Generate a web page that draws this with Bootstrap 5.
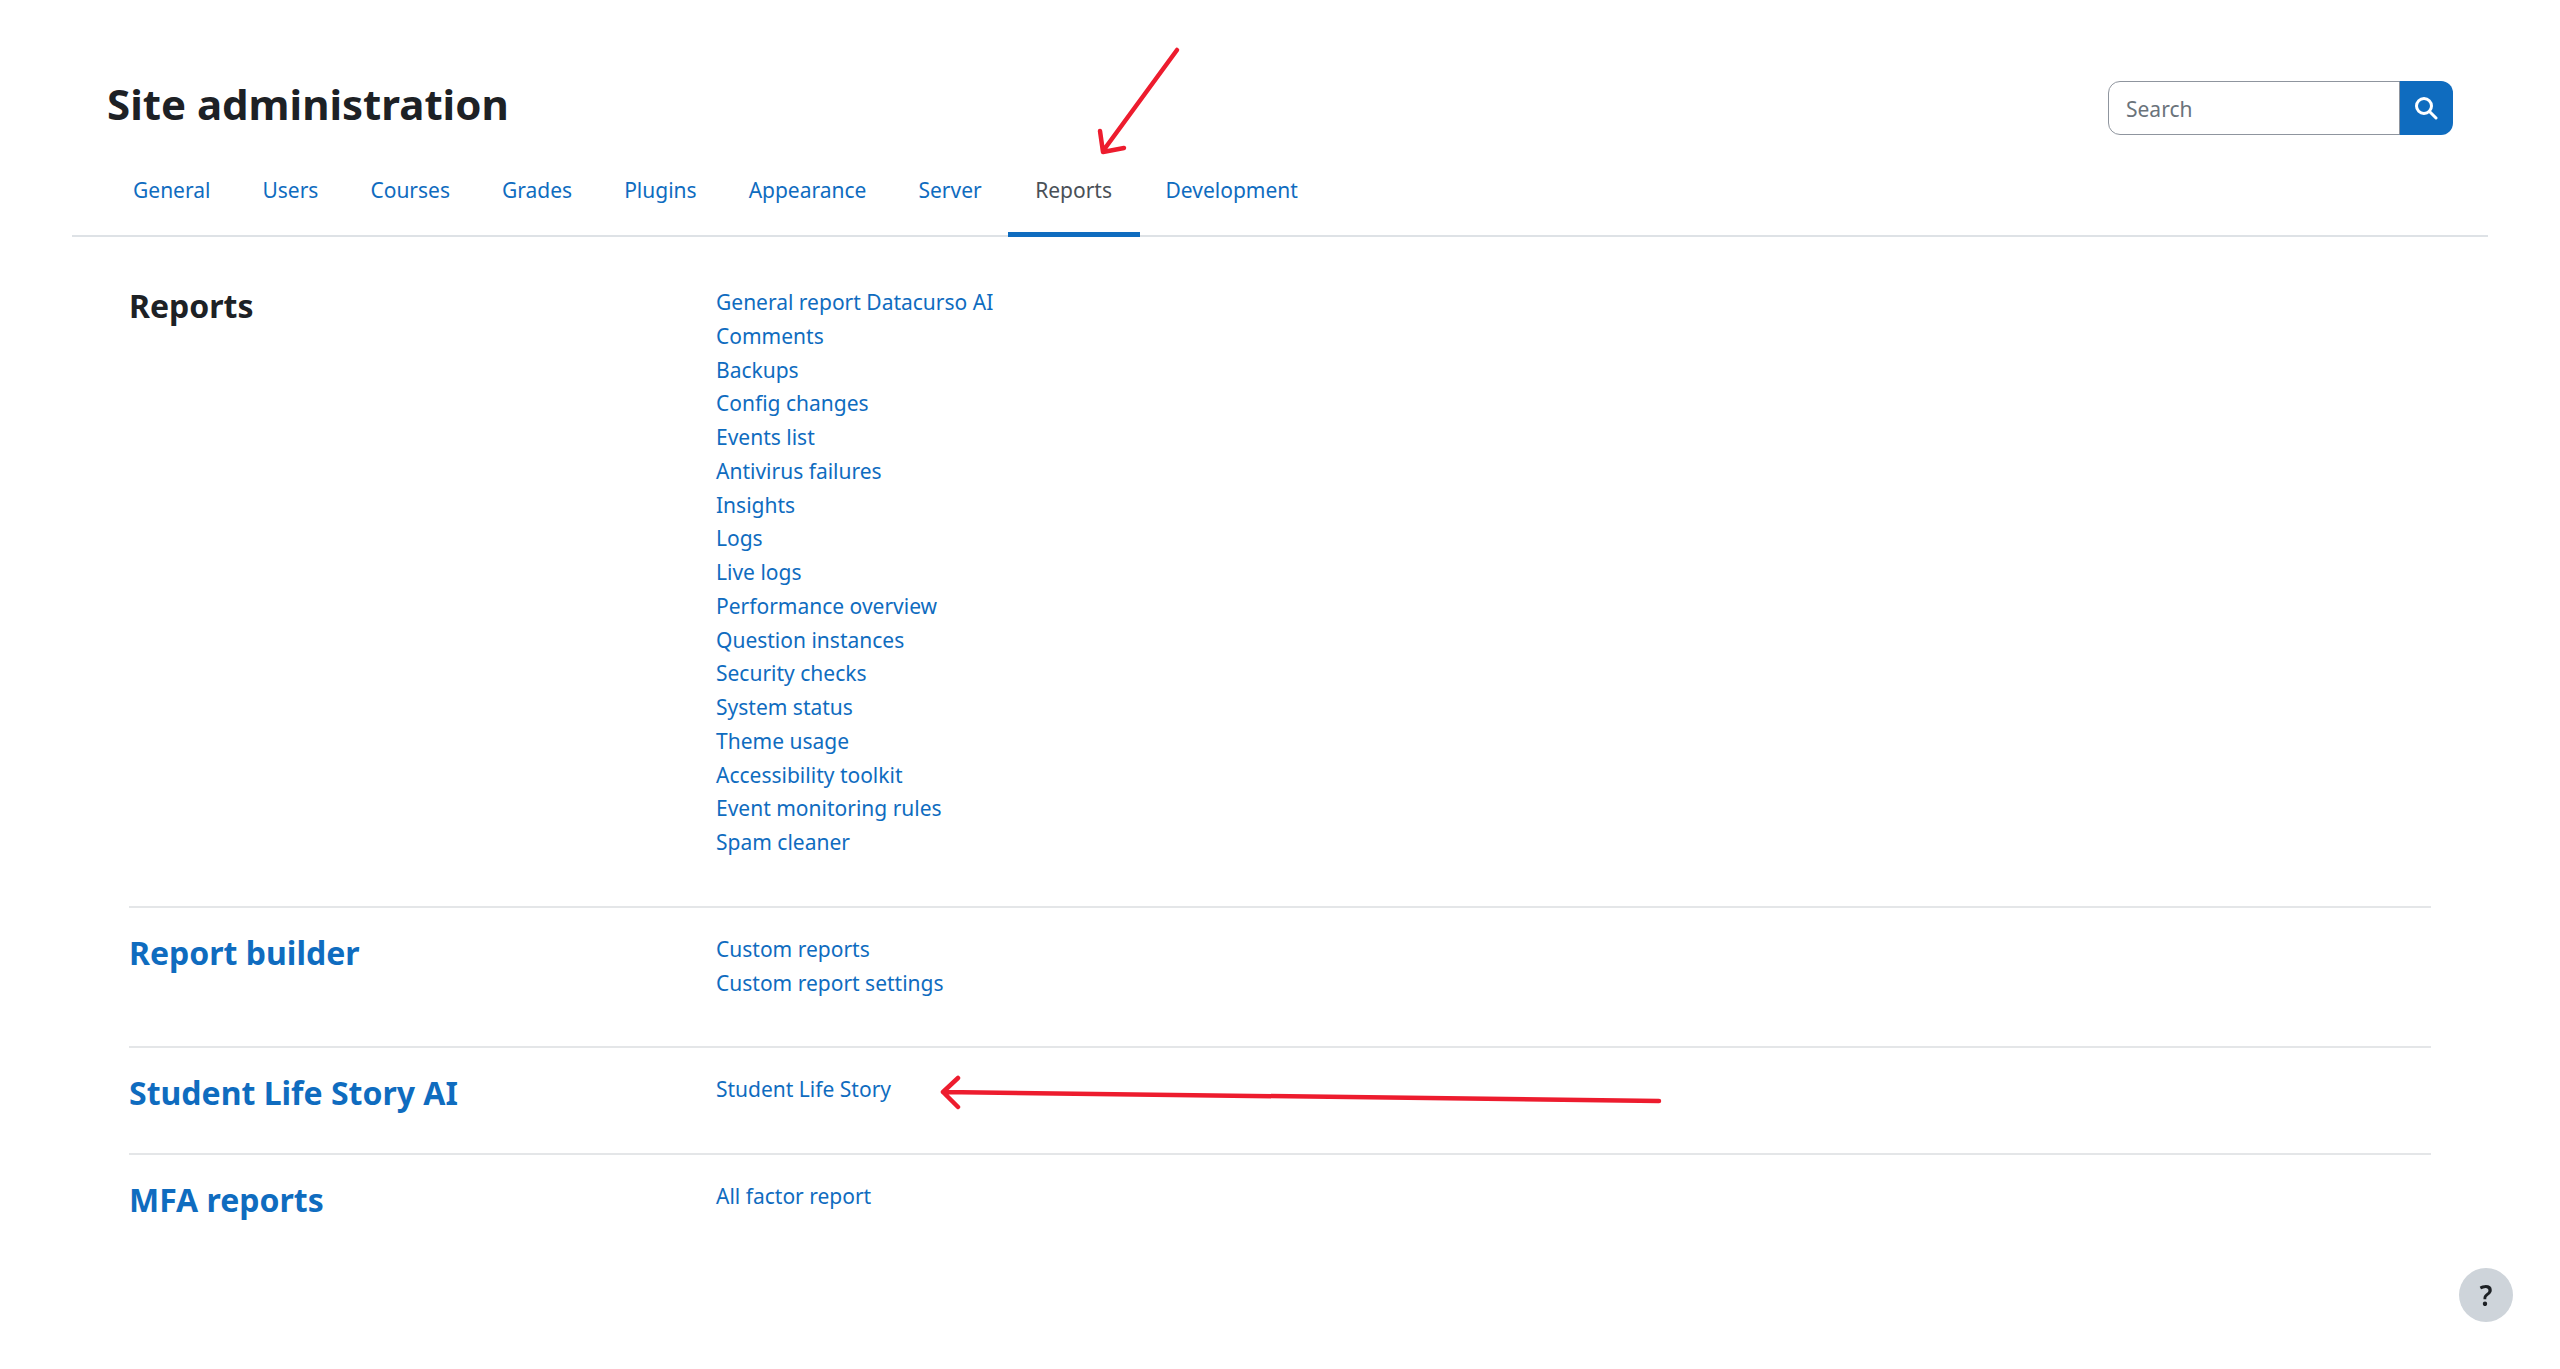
<!DOCTYPE html>
<html lang="en">
<head>
<meta charset="utf-8">
<title>Site administration</title>
<link href="https://cdn.jsdelivr.net/npm/bootstrap@5.3.0/dist/css/bootstrap.min.css" rel="stylesheet">
<style>
html, body { height: 100%; }
body { font-family: "Noto Sans", "Open Sans", sans-serif; font-size: 21px; line-height: 33.75px; color: #1d2125; background: #fff; overflow: hidden; position: relative; }
a { color: #0f6cbf; text-decoration: none; }
.page-head { padding: 80px 107px 0 107px; height: 156px; }
.site-title { font-size: 42px; line-height: 48px; font-weight: 700; margin: 0; color: #1d2125; }
.search-box { width: 345px; height: 54px; margin-top: 1px; }
.search-box .form-control { font-size: 21px; padding: 1px 17px 0; border: 1px solid #8f959e; border-radius: 12px 0 0 12px; height: 54px; font-family: inherit; }
.search-box .form-control::placeholder { color: #6a737b; }
.search-go { width: 54px; height: 54px; background: #0f6cbf; border: 0; border-radius: 0 12px 12px 0; padding: 0; }
.tab-bar { margin: 0 72px; padding: 0 35px; border-bottom: 2px solid #dee2e6; height: 81px; }
.tab-link { display: block; height: 81px; padding: 18px 26px 0; color: #0f6cbf; font-size: 21px; line-height: 33.75px; }
.tab-link.is-on { color: #495057; padding: 18px 27.5px 0; border-bottom: 5px solid #0f6cbf; }
.admin-rows { padding: 49px 129px 0; }
.admin-row { --bs-gutter-x: 0; margin: 0; padding: 0; }
.admin-row + .admin-row { border-top: 2px solid #e4e6e8; padding-top: 25px; }
.left-col { width: 587px; flex: none; }
.right-col { flex: 1 1 0; width: auto; }
.sec-head { font-size: 32px; line-height: 40px; font-weight: 700; margin: 0 0 40px; color: #1d2125; }
.sec-head a { color: #0f6cbf; }
.link-stack { list-style: none; margin: 0 0 46px; padding: 0; }
.help-btn { position: fixed; left: 2459px; top: 1268px; width: 54px; height: 54px; border-radius: 50%; background: #ced4da; color: #1d2125; border: 0; font-size: 28px; line-height: 54px; padding: 0; font-weight: 600; }
.marks { position: absolute; left: 0; top: 0; pointer-events: none; }
</style>
</head>
<body>
<header class="page-head d-flex justify-content-between align-items-start">
  <h1 class="site-title">Site administration</h1>
  <form class="search-box input-group flex-nowrap" onsubmit="return false">
    <input class="form-control" type="text" placeholder="Search" aria-label="Search">
    <button class="search-go d-flex align-items-center justify-content-center" type="button" aria-label="Search">
      <svg width="24" height="24" viewBox="0 0 24 24" fill="none" stroke="#fff" stroke-width="3" stroke-linecap="round"><circle cx="10" cy="10" r="7.5"/><path d="M15.5 15.5 22 22"/></svg>
    </button>
  </form>
</header>
<nav class="tab-bar">
  <ul class="nav flex-nowrap">
    <li class="nav-item"><a class="tab-link" href="#">General</a></li>
    <li class="nav-item"><a class="tab-link" href="#">Users</a></li>
    <li class="nav-item"><a class="tab-link" href="#">Courses</a></li>
    <li class="nav-item"><a class="tab-link" href="#">Grades</a></li>
    <li class="nav-item"><a class="tab-link" href="#">Plugins</a></li>
    <li class="nav-item"><a class="tab-link" href="#">Appearance</a></li>
    <li class="nav-item"><a class="tab-link" href="#">Server</a></li>
    <li class="nav-item"><a class="tab-link is-on" href="#">Reports</a></li>
    <li class="nav-item"><a class="tab-link" href="#">Development</a></li>
  </ul>
</nav>
<main class="admin-rows">
  <div class="row admin-row">
    <div class="left-col"><h4 class="sec-head">Reports</h4></div>
    <div class="right-col">
      <ul class="link-stack">
        <li><a href="#">General report Datacurso AI</a></li>
        <li><a href="#">Comments</a></li>
        <li><a href="#">Backups</a></li>
        <li><a href="#">Config changes</a></li>
        <li><a href="#">Events list</a></li>
        <li><a href="#">Antivirus failures</a></li>
        <li><a href="#">Insights</a></li>
        <li><a href="#">Logs</a></li>
        <li><a href="#">Live logs</a></li>
        <li><a href="#">Performance overview</a></li>
        <li><a href="#">Question instances</a></li>
        <li><a href="#">Security checks</a></li>
        <li><a href="#">System status</a></li>
        <li><a href="#">Theme usage</a></li>
        <li><a href="#">Accessibility toolkit</a></li>
        <li><a href="#">Event monitoring rules</a></li>
        <li><a href="#">Spam cleaner</a></li>
      </ul>
    </div>
  </div>
  <div class="row admin-row">
    <div class="left-col"><h4 class="sec-head"><a href="#">Report builder</a></h4></div>
    <div class="right-col">
      <ul class="link-stack">
        <li><a href="#">Custom reports</a></li>
        <li><a href="#">Custom report settings</a></li>
      </ul>
    </div>
  </div>
  <div class="row admin-row">
    <div class="left-col"><h4 class="sec-head"><a href="#">Student Life Story AI</a></h4></div>
    <div class="right-col">
      <ul class="link-stack"><li><a href="#">Student Life Story</a></li></ul>
    </div>
  </div>
  <div class="row admin-row">
    <div class="left-col"><h4 class="sec-head"><a href="#">MFA reports</a></h4></div>
    <div class="right-col">
      <ul class="link-stack"><li><a href="#">All factor report</a></li></ul>
    </div>
  </div>
</main>
<button class="help-btn" type="button" aria-label="Help">?</button>
<svg class="marks" width="2560" height="1369" viewBox="0 0 2560 1369" fill="none" stroke="#ed1c2e" stroke-width="4.5" stroke-linecap="round" stroke-linejoin="round" aria-hidden="true">
  <path d="M1177 50 1103 151M1100 131 1103 152 1124 148"/>
  <path d="M1659 1101 943 1092M958 1078 943 1092 958 1107"/>
</svg>
</body>
</html>
